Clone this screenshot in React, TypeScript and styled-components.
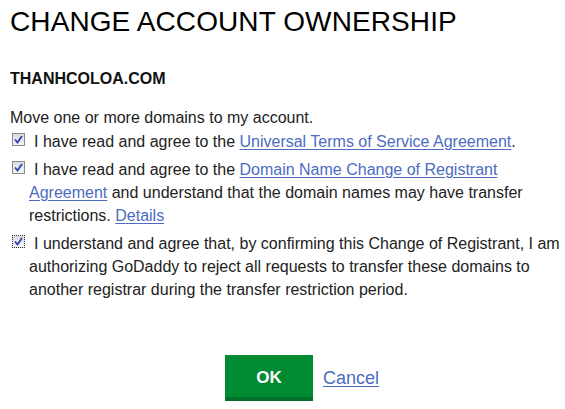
import React from 'react';
import styled, { createGlobalStyle } from 'styled-components';

const GlobalStyle = createGlobalStyle`
  body {
    margin: 0;
    background: #fff;
    font-family: 'Liberation Sans', Arial, sans-serif;
    color: #222;
  }
`;

interface AgreementProps {
  dotted?: boolean;
  children: React.ReactNode;
}

const Agreement: React.FC<AgreementProps> = ({ dotted, children }) => (
  <StyledAgreement>
    <StyledCheck dotted={dotted}>
      <svg width="11" height="11" viewBox="0 0 11 11">
        <path d="M2 5.5 L4.5 8.5 L9 2" fill="none" stroke="#2a3fb8" strokeWidth="1.8" />
      </svg>
    </StyledCheck>
    {children}
  </StyledAgreement>
);

const App: React.FC = () => (
  <>
    <GlobalStyle />
    <StyledPage>
      <StyledTitle>CHANGE ACCOUNT OWNERSHIP</StyledTitle>
      <StyledDomain>THANHCOLOA.COM</StyledDomain>
      <StyledIntro>Move one or more domains to my account.</StyledIntro>
      <Agreement>
        I have read and agree to the <StyledLink href="#">Universal Terms of Service Agreement</StyledLink>.
      </Agreement>
      <Agreement>
        I have read and agree to the <StyledLink href="#">Domain Name Change of Registrant Agreement</StyledLink> and
        understand that the domain names may have transfer restrictions. <StyledLink href="#">Details</StyledLink>
      </Agreement>
      <Agreement dotted>
        I understand and agree that, by confirming this Change of Registrant, I am authorizing GoDaddy to reject all
        requests to transfer these domains to another registrar during the transfer restriction period.
      </Agreement>
      <StyledActions>
        <StyledButton>OK</StyledButton>
        <StyledLink href="#">Cancel</StyledLink>
      </StyledActions>
    </StyledPage>
  </>
);

const StyledPage = styled.div`
  width: 565px;
  height: 409px;
  padding: 4px 0 0 10px;
  box-sizing: border-box;
`;

const StyledTitle = styled.h1`
  margin: 0;
  font-size: 28px;
  font-weight: 400;
  line-height: 36px;
  color: #000;
  letter-spacing: 0.1px;
`;

const StyledDomain = styled.div`
  margin-top: 29px;
  font-size: 16px;
  font-weight: 700;
  color: #111;
  line-height: 20px;
`;

const StyledIntro = styled.div`
  margin-top: 16px;
  font-size: 16px;
  line-height: 25px;
  color: #222;
`;

const StyledAgreement = styled.div`
  margin-bottom: 5px;
  padding-left: 19px;
  padding-right: 5px;
  text-indent: -17px;
  font-size: 16px;
  line-height: 23px;
  color: #222;
`;

const StyledCheck = styled.span<{ dotted?: boolean }>`
  display: inline-block;
  text-indent: 0;
  width: 11px;
  height: 11px;
  margin-right: 9px;
  vertical-align: 1px;
  border: 1px ${(p) => (p.dotted ? 'dotted #333' : 'solid #8a8a8a')};
  background: linear-gradient(#dcdcdc, #f4f4f4);

  svg {
    display: block;
  }
`;

const StyledLink = styled.a`
  color: #4c6cbf;
  text-decoration: underline;
  text-underline-offset: 2px;
`;

const StyledActions = styled.div`
  margin-top: 54px;
  margin-left: 215px;
  display: flex;
  align-items: center;
  gap: 10px;
  font-size: 18px;
`;

const StyledButton = styled.button`
  width: 88px;
  height: 46px;
  border: none;
  border-bottom: 4px solid #00702a;
  background: #008a32;
  color: #fff;
  font-family: 'Liberation Sans', Arial, sans-serif;
  font-size: 17px;
  font-weight: 700;
  padding: 4px 0 0;
`;

export default App;
